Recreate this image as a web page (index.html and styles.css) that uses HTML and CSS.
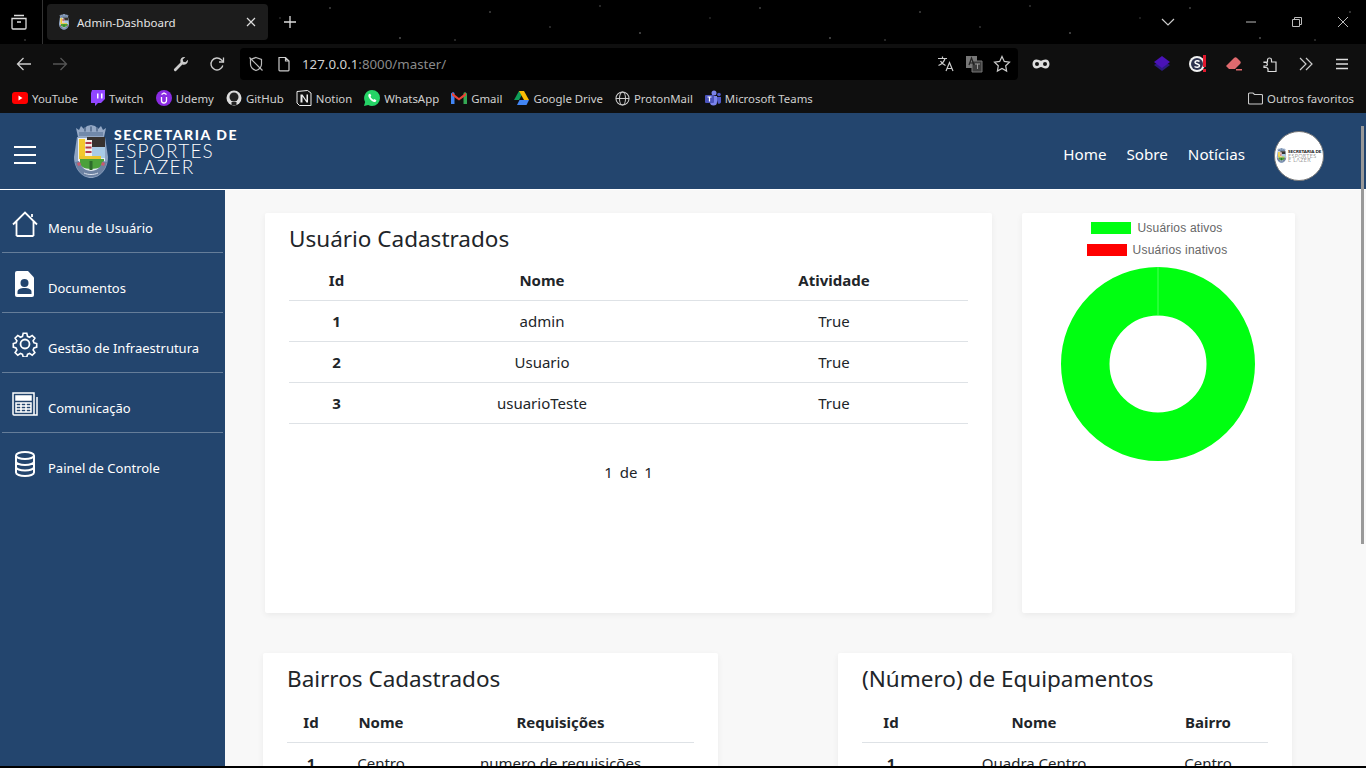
FILE: index.html
```html
<!DOCTYPE html>
<html lang="pt-BR">
<head>
  <meta charset="UTF-8">
  <title>Admin-Dashboard</title>
  <link rel="stylesheet" href="styles.css">
</head>
<body>

  <!-- shared crest, used by the logo and by the avatar -->
  <svg class="defs" width="0" height="0">
    <symbol id="crest" viewBox="0 0 34 54">
      <path d="M2 3l3 2 2-4 3 3 3-3 4-1 4 1 3 3 3-3 2 4 3-2-2 9H4z" fill="#95a9c6"/>
      <path d="M5 7h24v4H5z" fill="#7189aa"/>
      <path d="M10 2.500h2v4h-2zM16 1.500h2v5h-2zM22 2.500h2v4h-2z" fill="#5f7798"/>
      <path d="M3 12h28l3 20c0 12-8 21-17 21S0 44 0 32z" fill="#8ea4c2"/>
      <path d="M4 13h27v24c0 5-6 9-14 9S4 42 4 37z" fill="#e8edf3"/>
      <path d="M13 12h18v11H13z" fill="#37322f"/>
      <path d="M16 22h15v11H16z" fill="#a9cbe6"/>
      <path d="M5 14h6v18H5z" fill="#f2c92e"/>
      <path d="M11 15h7v17h-7z" fill="#f4f0ea"/>
      <path d="M11.500 17h6v2h-6zM11.500 21.500h6v2h-6zM11.500 26h6v2h-6z" fill="#b3384a"/>
      <path d="M5 31h22v3H5z" fill="#e9c52f"/>
      <path d="M6 34h24v4c0 3-6 6-13 6S6 41 6 38z" fill="#4ba03a"/>
      <path d="M15.500 36h3v9h-3z" fill="#2d6a2a"/>
      <path d="M1 37c2 9 8 15 16 15s14-6 16-15l-4-1c-2 6-6 10-12 10S7 42 5 36z" fill="#6d82a2"/>
      <path d="M3 38l3-1 1 3-3 1zM28 37l3 1-1 3-3-1z" fill="#c85a6e"/>
      <path d="M10 48c4 2 10 2 14 0" fill="none" stroke="#dfe5ee" stroke-width="1"/>
    </symbol>
  </svg>

  <!-- Browser chrome -->
  <div class="tabstrip">
    <div class="strip-btn">
      <svg width="18" height="18" viewBox="0 0 18 18" fill="none" stroke="#ddd" stroke-width="1.3"><path d="M4 2.500h10M2 5.500h14v9.500a1 1 0 0 1-1 1H3a1 1 0 0 1-1-1zM7 9h4"/></svg>
    </div>
    <div class="tab">
      <svg class="favicon" width="16" height="16" viewBox="0 0 34 54"><use href="#crest"/></svg>
      <span class="tab-title">Admin-Dashboard</span>
      <svg width="12" height="12" viewBox="0 0 12 12" stroke="#ddd" stroke-width="1.200"><path d="M2 2l8 8M10 2l-8 8"/></svg>
    </div>
    <div class="new-tab">
      <svg width="14" height="14" viewBox="0 0 14 14" stroke="#ddd" stroke-width="1.300"><path d="M7 1v12M1 7h12"/></svg>
    </div>
    <div class="tab-search">
      <svg width="14" height="8" viewBox="0 0 14 8" fill="none" stroke="#ccc" stroke-width="1.200"><path d="M1 1l6 6 6-6"/></svg>
    </div>
    <div class="win-btn"><svg width="10" height="10" viewBox="0 0 10 10" stroke="#bbb"><path d="M0 5h10"/></svg></div>
    <div class="win-btn"><svg width="10" height="10" viewBox="0 0 10 10" fill="none" stroke="#bbb"><path d="M.5 2.500h7v7h-7zM2.500 2.500v-2h7v7h-2"/></svg></div>
    <div class="win-btn"><svg width="10" height="10" viewBox="0 0 10 10" stroke="#bbb"><path d="M0 0l10 10M10 0L0 10"/></svg></div>
  </div>

  <div class="toolbar">
    <div class="tool">
      <svg width="16" height="16" viewBox="0 0 16 16" fill="none" stroke="#ccc" stroke-width="1.300"><path d="M15 8H1.500M7.500 2l-6 6 6 6"/></svg>
    </div>
    <div class="tool">
      <svg width="16" height="16" viewBox="0 0 16 16" fill="none" stroke="#555" stroke-width="1.300"><path d="M1 8h13.500M8.500 2l6 6-6 6"/></svg>
    </div>
    <div class="tool tool-push">
      <svg width="16" height="16" viewBox="0 0 16 16" fill="#ccc"><path d="M15 4.500a4.200 4.200 0 0 1-5.600 4L3.300 14.700a1.400 1.400 0 0 1-2-2l6.200-6.100A4.200 4.200 0 0 1 12.300 1L9.700 3.600l.5 2.200 2.200.5L15 3.700z"/></svg>
    </div>
    <div class="tool">
      <svg width="16" height="16" viewBox="0 0 16 16" fill="none" stroke="#ccc" stroke-width="1.300"><path d="M13.800 9.500A6 6 0 1 1 12.300 3.800L14.500 6"/><path d="M14.500 1.500V6H10" /></svg>
    </div>

    <div class="urlbar">
      <svg width="16" height="16" viewBox="0 0 16 16" fill="none" stroke="#bbb" stroke-width="1.200"><path d="M8 1.500l5.500 2v4.500c0 3.500-2.500 5.500-5.500 6.500-3-1-5.500-3-5.500-6.500V3.500zM1.500 1.500l13 13"/></svg>
      <svg class="url-page" width="14" height="16" viewBox="0 0 14 16" fill="none" stroke="#ccc" stroke-width="1.200"><path d="M2 1.500h6.500l3.500 3.500v9a.8.8 0 0 1-.8.8H2.800a.8.800 0 0 1-.8-.8zM8.500 1.500V5H12"/></svg>
      <span class="url-text">127.0.0.1<span class="url-dim">:8000/master/</span></span>
      <div class="url-actions">
        <svg width="18" height="18" viewBox="0 0 18 18" fill="none" stroke="#ccc" stroke-width="1.200"><path d="M1 3.500h9M5.500 1.500v2M8 3.500c-.8 3-3 5.500-6.500 7M3.500 6c1 2 2.800 3.500 5 4.500M9 16l3.500-8.500L16 16M10 13.500h5"/></svg>
        <svg width="18" height="18" viewBox="0 0 18 18"><path d="M1 1h11v12H1z" fill="#777"/><path d="M7 6h10v11H7z" fill="#3c3c3c" stroke="#777"/><path d="M4 10l2.500-7L9 10M5 8h3" fill="none" stroke="#222" stroke-width="1.200"/><path d="M10 9h5M12.500 9v5" stroke="#999"/></svg>
        <svg width="18" height="18" viewBox="0 0 18 18" fill="none" stroke="#ccc" stroke-width="1.200"><path d="M9 1.500l2.300 4.900 5.200.7-3.800 3.700.9 5.300L9 13.500l-4.600 2.600.9-5.300-3.800-3.700 5.200-.7z"/></svg>
      </div>
    </div>

    <div class="tool">
      <svg width="18" height="12" viewBox="0 0 18 12" fill="#ddd"><path d="M4.500 1.500c2 0 3.200 1.200 4.500 1.200s2.500-1.200 4.500-1.200c2.500 0 4 2 4 4.500s-1.500 4.500-4 4.500c-2 0-3.200-1.500-4.500-1.500s-2.500 1.500-4.500 1.500C2 10.500.5 8.500.5 6s1.500-4.500 4-4.500z"/><circle cx="5" cy="6" r="2" fill="#111"/><circle cx="13" cy="6" r="2" fill="#111"/></svg>
    </div>
    <div class="tool tool-push">
      <svg width="18" height="18" viewBox="0 0 18 18"><path d="M9 5l8 5-8 6-8-6z" fill="#2c1a80"/><path d="M9 1l8 6-8 6-8-6z" fill="#4a12b8"/></svg>
    </div>
    <div class="tool">
      <svg width="18" height="18" viewBox="0 0 18 18"><circle cx="8" cy="9" r="8" fill="#f1f1f1"/><circle cx="8" cy="9" r="6" fill="#2d3350"/><path d="M10.500 6.500c-1-1-4.500-1.200-4.500.8 0 2.200 4.500 1.200 4.500 3.400 0 2-3.500 1.800-5 .8" fill="none" stroke="#fff" stroke-width="1.500"/><path d="M14 0h3v12h-3zM14 14h3v3h-3z" fill="#e0182d"/></svg>
    </div>
    <div class="tool">
      <svg width="18" height="16" viewBox="0 0 18 16"><path d="M1 10l8-8c1-1 2-1 3 0l3 3c1 1 1 2 0 3l-5 5H4z" fill="#e06a6e"/><path d="M11 13h6v1.500h-6z" fill="#e06a6e"/></svg>
    </div>
    <div class="tool">
      <svg width="18" height="18" viewBox="0 0 18 18" fill="none" stroke="#ddd" stroke-width="1.200"><path d="M3 7h3.500V5a2 2 0 1 1 4 0v2H15v9.500H7v-2.500a2 2 0 0 0-2-1.500H3V11h2a1.800 1.800 0 0 0 0-3.500H3z"/></svg>
    </div>
    <div class="tool">
      <svg width="14" height="14" viewBox="0 0 14 14" fill="none" stroke="#ccc" stroke-width="1.200"><path d="M1 1l6 6-6 6M7 1l6 6-6 6"/></svg>
    </div>
    <div class="tool">
      <svg width="14" height="12" viewBox="0 0 14 12" stroke="#ddd" stroke-width="1.300"><path d="M1 1.500h12M1 6h12M1 10.500h12"/></svg>
    </div>
  </div>

  <div class="bookmarks">
    <div class="bookmark">
      <svg width="16" height="12" viewBox="0 0 16 12"><rect width="16" height="12" rx="3" fill="#f00"/><path d="M6.500 3.500v5l4-2.500z" fill="#fff"/></svg>
      YouTube
    </div>
    <div class="bookmark">
      <svg width="15" height="16" viewBox="0 0 15 16"><path d="M2 0h13v9l-4 4H8l-3 3v-3H1V3z" fill="#9146ff"/><path d="M7 3.500h1.500v5H7zM11 3.500h1.500v5H11z" fill="#fff"/></svg>
      Twitch
    </div>
    <div class="bookmark">
      <svg width="16" height="16" viewBox="0 0 16 16"><circle cx="8" cy="8" r="8" fill="#8a2be2"/><path d="M5.500 7v3.500a2.500 2.500 0 0 0 5 0V7M5.500 4.500L8 3l2.500 1.500" fill="none" stroke="#fff" stroke-width="1.300"/></svg>
      Udemy
    </div>
    <div class="bookmark">
      <svg width="16" height="16" viewBox="0 0 16 16"><circle cx="8" cy="8" r="7.500" fill="#ddd"/><circle cx="8" cy="7" r="4.500" fill="#222"/><path d="M5.500 15v-3h5v3z" fill="#222"/></svg>
      GitHub
    </div>
    <div class="bookmark">
      <svg width="16" height="16" viewBox="0 0 16 16"><path d="M1 1.500L11.500.5 15 3v12.500H3.500L1 13z" fill="#111" stroke="#eee"/><path d="M4.500 4.500h2l4 6v-6h1.500v8h-1.500l-4-6v6H4.500z" fill="#eee"/></svg>
      Notion
    </div>
    <div class="bookmark">
      <svg width="16" height="16" viewBox="0 0 16 16"><path d="M8 0a8 8 0 0 1 0 16c-1.400 0-2.700-.4-3.800-1L0 16l1.100-4.100A8 8 0 0 1 8 0z" fill="#25d366"/><path d="M5 4c-1 1-1 2.500.5 4.500s3.500 3.500 5 3.500c1 0 1.800-.8 1.800-1.800L10.500 9l-1 .8C8.500 9.500 7 8 6.500 6.800l.8-1L6.200 3.800z" fill="#fff"/></svg>
      WhatsApp
    </div>
    <div class="bookmark">
      <svg width="16" height="12" viewBox="0 0 16 12"><path d="M0 12V1.500L2 0l1.500 1v11z" fill="#4285f4"/><path d="M16 12V1.500L14 0l-1.500 1v11z" fill="#34a853"/><path d="M1 .5L8 6l7-5.500v3L8 8.500 1 3.500z" fill="#ea4335"/></svg>
      Gmail
    </div>
    <div class="bookmark">
      <svg width="15" height="14" viewBox="0 0 15 14"><path d="M5 0h5L5 9H0z" fill="#0f9d58"/><path d="M10 0l5 9h-5L5 0z" fill="#fbbc04"/><path d="M3 14l2.500-5H15l-2.500 5z" fill="#4285f4"/></svg>
      Google Drive
    </div>
    <div class="bookmark">
      <svg width="15" height="15" viewBox="0 0 16 16" fill="none" stroke="#ccc" stroke-width="1.100"><circle cx="8" cy="8" r="7"/><ellipse cx="8" cy="8" rx="3.200" ry="7"/><path d="M1 8h14"/></svg>
      ProtonMail
    </div>
    <div class="bookmark">
      <svg width="16" height="16" viewBox="0 0 16 16"><circle cx="9" cy="3" r="2.500" fill="#7b83eb"/><circle cx="14" cy="4.500" r="1.800" fill="#5059c9"/><path d="M11 7h5v5a2 2 0 0 1-3 1.500z" fill="#5059c9"/><path d="M5 6h7v6a3.500 3.500 0 0 1-7 0z" fill="#7b83eb"/><rect y="5" width="9" height="8" rx="1" fill="#4b53bc"/><path d="M2.500 7h4M4.500 7v4.500" stroke="#fff" stroke-width="1.200"/></svg>
      Microsoft Teams
    </div>
    <div class="bookmark bookmark-other">
      <svg width="15" height="13" viewBox="0 0 15 13" fill="none" stroke="#ccc" stroke-width="1.100"><path d="M.5 2a1 1 0 0 1 1-1H5l1.500 1.500h7a1 1 0 0 1 1 1V11a1 1 0 0 1-1 1h-12a1 1 0 0 1-1-1z"/></svg>
      Outros favoritos
    </div>
  </div>

  <!-- Page -->
  <div class="page">
    <header class="topbar">
      <div class="burger"><span></span><span></span><span></span></div>
      <div class="logo">
        <svg class="logo-crest" width="34" height="54"><use href="#crest"/></svg>
        <div class="logo-text">
          <div class="logo-top">SECRETARIA DE</div>
          <div class="logo-sub">ESPORTES</div>
          <div class="logo-sub">E LAZER</div>
        </div>
      </div>
      <nav class="topnav">
        <a>Home</a>
        <a>Sobre</a>
        <a>Notícias</a>
      </nav>
      <div class="avatar">
        <svg width="11" height="15"><use href="#crest"/></svg>
        <div class="avatar-text">
          <div class="avatar-top">SECRETARIA DE</div>
          <div class="avatar-sub">ESPORTES</div>
          <div class="avatar-sub">E LAZER</div>
        </div>
      </div>
    </header>

    <div class="app">
      <aside class="sidebar">
        <a class="side-item">
          <svg class="side-icon" viewBox="0 0 26 26" fill="none" stroke="#fff" stroke-width="1.800"><path d="M1 13.500L13 1.500l12 12M4.500 10.500V25M21.500 10.500V25M4.500 25h17M20 6V3"/></svg>
          <span>Menu de Usuário</span>
        </a>
        <a class="side-item">
          <svg class="side-icon" viewBox="0 0 26 26" fill="#fff"><path d="M5 0h11l6 6.500V24a2 2 0 0 1-2 2H5a2 2 0 0 1-2-2V2a2 2 0 0 1 2-2z"/><circle cx="12.500" cy="12" r="4" fill="#23456e"/><path d="M5.500 23v-2c0-3 3-4 7-4s7 1 7 4v2z" fill="#23456e"/></svg>
          <span>Documentos</span>
        </a>
        <a class="side-item">
          <svg class="side-icon" viewBox="0 0 26 26" fill="none" stroke="#fff" stroke-width="1.800"><circle cx="13" cy="13" r="4.500"/><path d="M11 1h4l.8 3.500 2.200 1 3-2 3 3-2 3 1 2.200 3 .8v4l-3 .8-1 2.200 2 3-3 3-3-2-2.200 1-.8 3h-4l-.8-3-2.200-1-3 2-3-3 2-3-1-2.200-3-.8v-4l3-.8 1-2.200-2-3 3-3 3 2 2.200-1z" transform="translate(1.300 1.300) scale(.9)"/></svg>
          <span>Gestão de Infraestrutura</span>
        </a>
        <a class="side-item">
          <svg class="side-icon" viewBox="0 0 26 26" fill="none" stroke="#fff" stroke-width="1.500"><path d="M1 2h21v22H2a1 1 0 0 1-1-1zM25 6v18h-3"/><path d="M4 5h15v4H4z" fill="#fff"/><path d="M4 12h15v9H4zM4 15h15M4 18h15M9 12v9M14 12v9"/></svg>
          <span>Comunicação</span>
        </a>
        <a class="side-item">
          <svg class="side-icon" viewBox="0 0 26 26" fill="none" stroke="#fff" stroke-width="2"><ellipse cx="13" cy="4.500" rx="9" ry="3.500"/><path d="M4 4.500v17c0 2 4 3.500 9 3.500s9-1.500 9-3.500v-17M4 10.500c0 2 4 3.500 9 3.500s9-1.500 9-3.500M4 16c0 2 4 3.500 9 3.500s9-1.500 9-3.500"/></svg>
          <span>Painel de Controle</span>
        </a>
      </aside>

      <main class="content">
        <div class="row row-top">
          <section class="card card-users">
            <h2>Usuário Cadastrados</h2>
            <table class="users-table">
              <thead><tr><th class="c-id">Id</th><th class="c-name">Nome</th><th>Atividade</th></tr></thead>
              <tbody>
                <tr><th>1</th><td>admin</td><td>True</td></tr>
                <tr><th>2</th><td>Usuario</td><td>True</td></tr>
                <tr><th>3</th><td>usuarioTeste</td><td>True</td></tr>
              </tbody>
            </table>
            <div class="pager">1 de 1</div>
          </section>

          <section class="card card-chart">
            <div class="legend">
              <div class="legend-item"><i class="swatch swatch-on"></i>Usuários ativos</div>
              <div class="legend-item"><i class="swatch swatch-off"></i>Usuários inativos</div>
            </div>
            <svg class="donut" width="194" height="194" viewBox="0 0 194 194">
              <circle cx="97" cy="97" r="72.750" fill="none" stroke="#0f1" stroke-width="48.500"/>
              <path d="M97 0v48.500" stroke="#4dff5a" stroke-width="1"/>
            </svg>
          </section>
        </div>

        <div class="row row-bottom">
          <section class="card card-half">
            <h2>Bairros Cadastrados</h2>
            <table class="bairros-table">
              <thead><tr><th class="c-id">Id</th><th class="c-name">Nome</th><th>Requisições</th></tr></thead>
              <tbody>
                <tr><th>1</th><td>Centro</td><td>numero de requisições</td></tr>
              </tbody>
            </table>
          </section>

          <section class="card card-half card-equip">
            <h2>(Número) de Equipamentos</h2>
            <table class="equip-table">
              <thead><tr><th class="c-id">Id</th><th class="c-name">Nome</th><th>Bairro</th></tr></thead>
              <tbody>
                <tr><th>1</th><td>Quadra Centro</td><td>Centro</td></tr>
              </tbody>
            </table>
          </section>
        </div>
      </main>

      <div class="scroll-thumb"></div>
    </div>
  </div>

</body>
</html>
```

FILE: styles.css
```css
/* Basic Styling */
* {
  box-sizing: border-box;
}
html, body {
  height: 768px;
  overflow: hidden;
}
body {
  margin: 0;
  display: flex;
  flex-direction: column;
  background-color: #000;
  color: #212529;
  font-family: "Noto Sans", "Open Sans", sans-serif;
}
svg {
  display: block;
  flex: none;
}
.defs {
  position: absolute;
}

/* Browser chrome */
.tabstrip {
  height: 44px;
  display: flex;
  align-items: center;
  background-color: #000;
  background-image:
    radial-gradient(circle at 60px 12px, #555 0 .5px, transparent 1px),
    radial-gradient(circle at 210px 33px, #666 0 .5px, transparent 1px),
    radial-gradient(circle at 120px 27px, #444 0 .5px, transparent 1px),
    radial-gradient(circle at 330px 8px, #555 0 .5px, transparent 1px),
    radial-gradient(circle at 400px 38px, #666 0 .5px, transparent 1px),
    radial-gradient(circle at 280px 18px, #333 0 .5px, transparent 1px),
    radial-gradient(circle at 170px 6px, #444 0 .5px, transparent 1px),
    radial-gradient(circle at 25px 40px, #444 0 .5px, transparent 1px);
  background-size: 430px 44px;
}
.strip-btn {
  width: 43px;
  height: 44px;
  display: flex;
  align-items: center;
  justify-content: center;
  padding-right: 5px;
  border-right: 1px solid #333;
}
.tab {
  width: 221px;
  height: 36px;
  margin-left: 4px;
  padding: 0 11px 0 9px;
  display: flex;
  align-items: center;
  gap: 5px;
  background-color: #1c1c1c;
  border-radius: 4px;
  color: #e6e6e6;
  font-size: 11.500px;
}
.tab-title {
  flex: 1;
}
.new-tab {
  margin-left: 15px;
}
.tab-search {
  margin-left: auto;
  margin-right: 53px;
}
.win-btn {
  width: 46px;
  height: 44px;
  display: flex;
  align-items: center;
  justify-content: center;
}
.toolbar {
  height: 37px;
  padding: 2px 6px 0;
  display: flex;
  align-items: center;
  background-color: #0f0f0f;
}
.tool {
  width: 36px;
  height: 36px;
  display: flex;
  align-items: center;
  justify-content: center;
}
.tool-push {
  margin-left: auto;
}
.urlbar {
  width: 778px;
  height: 32px;
  margin: 0 5px;
  padding: 0 7px 0 8px;
  display: flex;
  align-items: center;
  background-color: #000;
  border-radius: 4px;
  font-size: 13.300px;
  color: #d0d0d0;
}
.url-page {
  margin-left: 13px;
}
.url-text {
  margin-left: 11px;
}
.url-dim {
  color: #8a8a8a;
}
.url-actions {
  margin-left: auto;
  display: flex;
  gap: 10px;
}
.bookmarks {
  height: 32px;
  padding: 2px 12px 0;
  display: flex;
  align-items: center;
  gap: 12px;
  background-color: #0f0f0f;
  color: #cfcfcf;
  font-size: 11.400px;
}
.bookmark {
  display: flex;
  align-items: center;
  gap: 4px;
}
.bookmark-other {
  margin-left: auto;
}

/* Page */
.page {
  flex: 1;
  min-height: 0;
  margin-bottom: 2px;
  display: flex;
  flex-direction: column;
  overflow: hidden;
}
.topbar {
  height: 77px;
  flex: none;
  padding-top: 8px;
  display: flex;
  align-items: center;
  background-color: #23456e;
  border-bottom: 1px solid #fff;
  color: #fff;
}
.burger {
  width: 22px;
  margin-left: 14px;
  display: flex;
  flex-direction: column;
  gap: 6px;
}
.burger span {
  height: 2px;
  background-color: #fff;
}
.logo {
  margin: -6px 0 0 38px;
  display: flex;
  gap: 6px;
}
.logo-text {
  padding-top: 2px;
  font-family: "Lato", sans-serif;
}
.logo-top {
  font-size: 14px;
  line-height: 16px;
  font-weight: 900;
  letter-spacing: 1.550px;
}
.logo-sub {
  font-size: 19px;
  line-height: 16px;
  font-weight: 300;
  letter-spacing: 1.200px;
}
.topnav {
  margin-left: auto;
  margin-top: -2px;
  display: flex;
  gap: 20px;
  font-size: 15.200px;
}
.avatar {
  width: 50px;
  height: 50px;
  margin: 1px 42px 0 29px;
  padding-left: 1px;
  display: flex;
  align-items: center;
  gap: 1px;
  background-color: #fff;
  border: 1px solid #777;
  border-radius: 50%;
  overflow: hidden;
  color: #444;
  font-family: "Lato", sans-serif;
}
.avatar-top {
  font-size: 4.500px;
  line-height: 5px;
  font-weight: 900;
  color: #111;
  white-space: nowrap;
}
.avatar-sub {
  font-size: 5.500px;
  line-height: 4.500px;
  letter-spacing: .3px;
  font-weight: 300;
}
.app {
  position: relative;
  flex: 1;
  min-height: 0;
  display: flex;
  background-color: #f8f8f8;
}

/* Sidebar */
.sidebar {
  width: 225px;
  flex: none;
  padding: 3px 2px 0;
  background-color: #23456e;
  color: #fff;
  font-size: 13px;
}
.side-item {
  height: 60px;
  padding: 18px 0 0 10px;
  display: flex;
  gap: 10px;
  border-bottom: 1px solid rgba(255, 255, 255, .3);
}
.side-item:last-child {
  border-bottom: 0;
}
.side-icon {
  width: 26px;
  height: 26px;
}
.side-item span {
  margin-top: 7px;
  line-height: 20px;
}

/* Content */
.content {
  flex: 1;
  min-width: 0;
  font-size: 15px;
}
.row {
  display: flex;
}
.row-top {
  margin: 23px 0 0 40px;
  gap: 30px;
}
.row-bottom {
  margin: 40px 0 0 38px;
  gap: 120px;
}
.card {
  padding: 11px 24px 0;
  background-color: #fff;
  border-radius: 2px;
  box-shadow: 0 2px 6px rgba(0, 0, 0, .06);
}
.card h2 {
  margin: 0 0 7px;
  font-size: 22.500px;
  line-height: 29px;
  font-weight: 400;
}
.card-half h2 {
  margin-bottom: 9px;
}
.card-users {
  width: 727px;
  height: 400px;
}
.card-chart {
  width: 273px;
  height: 400px;
  padding: 0;
}
.card-half {
  width: 455px;
  height: 300px;
}
.card-equip {
  width: 454px;
}

/* Tables */
table {
  width: 100%;
  border-collapse: collapse;
  table-layout: fixed;
  text-align: center;
}
thead th {
  height: 40px;
  font-weight: 700;
  border-bottom: 1px solid #dee2e6;
}
tbody th, tbody td {
  height: 41px;
  border-bottom: 1px solid #dee2e6;
}
.users-table .c-id { width: 95px; }
.users-table .c-name { width: 316px; }
.bairros-table .c-id { width: 48px; }
.bairros-table .c-name { width: 92px; }
.equip-table .c-id { width: 58px; }
.equip-table .c-name { width: 228px; }
.pager {
  margin-top: 38px;
  text-align: center;
  line-height: 20px;
  word-spacing: 3px;
}

/* Chart */
.legend {
  padding: 4px 3px 0 0;
  font-family: "Liberation Sans", Arial, sans-serif;
  font-size: 12px;
  line-height: 22px;
  letter-spacing: .2px;
  color: #666;
}
.legend-item {
  display: flex;
  justify-content: center;
  align-items: center;
  gap: 6px;
}
.swatch {
  width: 40px;
  height: 12px;
}
.swatch-on {
  background-color: #0f1;
}
.swatch-off {
  background-color: #f00;
}
.donut {
  margin: 6px 0 0 39px;
}
.scroll-thumb {
  position: absolute;
  top: -64px;
  right: 2px;
  width: 3px;
  height: 418px;
  background-color: #999;
}
```
